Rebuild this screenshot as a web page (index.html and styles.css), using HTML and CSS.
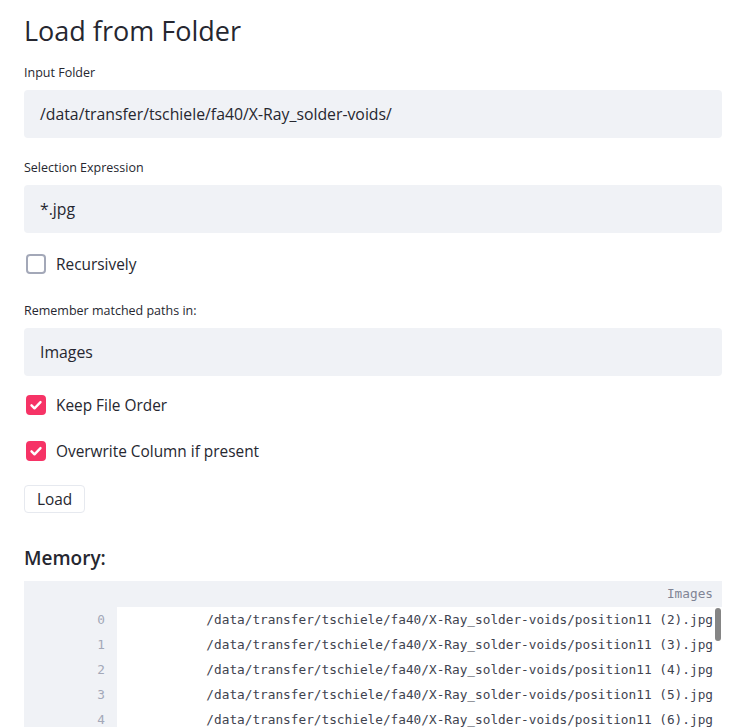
FILE: index.html
```html
<!DOCTYPE html>
<html>
<head>
<meta charset="utf-8">
<link rel="stylesheet" href="styles.css">
</head>
<body>
<main class="main">
  <h1 class="title">Load from Folder</h1>

  <div class="field f1">
    <div class="label">Input Folder</div>
    <div class="input">/data/transfer/tschiele/fa40/X-Ray_solder-voids/</div>
  </div>

  <div class="field f2">
    <div class="label">Selection Expression</div>
    <div class="input">*.jpg</div>
  </div>

  <label class="check c1">
    <span class="box"></span>
    <span class="ctext">Recursively</span>
  </label>

  <div class="field f3">
    <div class="label">Remember matched paths in:</div>
    <div class="input">Images</div>
  </div>

  <label class="check c2">
    <span class="box on"><svg viewBox="0 0 20 20" width="20" height="20"><path d="M5.5 10.3l3 3 6-6.2" fill="none" stroke="#fff" stroke-width="2.4" stroke-linecap="round" stroke-linejoin="round"/></svg></span>
    <span class="ctext">Keep File Order</span>
  </label>

  <label class="check c3">
    <span class="box on"><svg viewBox="0 0 20 20" width="20" height="20"><path d="M5.5 10.3l3 3 6-6.2" fill="none" stroke="#fff" stroke-width="2.4" stroke-linecap="round" stroke-linejoin="round"/></svg></span>
    <span class="ctext">Overwrite Column if present</span>
  </label>

  <div class="btnrow"><button class="btn">Load</button></div>

  <h3 class="subtitle">Memory:</h3>

  <div class="grid">
    <div class="hrow">
      <div class="idx"></div>
      <div class="hcell">Images</div>
    </div>
    <div class="row"><div class="idx">0</div><div class="cell">/data/transfer/tschiele/fa40/X-Ray_solder-voids/position11 (2).jpg</div></div>
    <div class="row"><div class="idx">1</div><div class="cell">/data/transfer/tschiele/fa40/X-Ray_solder-voids/position11 (3).jpg</div></div>
    <div class="row"><div class="idx">2</div><div class="cell">/data/transfer/tschiele/fa40/X-Ray_solder-voids/position11 (4).jpg</div></div>
    <div class="row"><div class="idx">3</div><div class="cell">/data/transfer/tschiele/fa40/X-Ray_solder-voids/position11 (5).jpg</div></div>
    <div class="row"><div class="idx">4</div><div class="cell">/data/transfer/tschiele/fa40/X-Ray_solder-voids/position11 (6).jpg</div></div>
    <div class="row"><div class="idx">5</div><div class="cell">/data/transfer/tschiele/fa40/X-Ray_solder-voids/position11 (7).jpg</div></div>
    <div class="scrollbar"></div>
  </div>
</main>
</body>
</html>
```

FILE: styles.css
```css
html, body {
  margin: 0;
  padding: 0;
  background: #ffffff;
  overflow: hidden;
}

body {
  font-family: "Open Sans", "Noto Sans", sans-serif;
  color: #262730;
}

.main {
  width: 698px;
  padding: 11px 0 0 24px;
  display: flex;
  flex-direction: column;
}

.title {
  margin: 0;
  font-size: 27px;
  line-height: 40px;
  font-weight: 400;
  color: #262730;
}

.field {
  display: flex;
  flex-direction: column;
}

.f1 { margin-top: 14px; }
.f2 { margin-top: 22px; }
.f3 { margin-top: 27px; }

.label {
  font-size: 12.5px;
  line-height: 16px;
  height: 16px;
  margin-bottom: 9px;
  color: #262730;
}

.input {
  height: 48px;
  box-sizing: border-box;
  background: #f0f2f6;
  border-radius: 4px;
  padding: 0 16px;
  display: flex;
  align-items: center;
  font-size: 15.8px;
  color: #262730;
}

.check {
  display: flex;
  align-items: center;
  height: 24px;
  gap: 10px;
  padding-left: 2px;
  font-size: 15.4px;
}

.c1 { margin-top: 19px; }
.c2 { margin-top: 17px; }
.c3 { margin-top: 22px; }

.box {
  width: 20px;
  height: 20px;
  box-sizing: border-box;
  border: 2px solid #a3a8b8;
  border-radius: 4px;
  display: inline-flex;
  align-items: center;
  justify-content: center;
  flex: none;
}

.box.on {
  background: #f63366;
  border-color: #f63366;
}

.box svg {
  display: block;
  flex: none;
}

.ctext {
  color: #262730;
}

.btnrow {
  margin-top: 22px;
  display: flex;
}

.btn {
  height: 28px;
  padding: 0 12px;
  background: #fff;
  border: 1px solid #e6e9ef;
  border-radius: 4px;
  font-family: inherit;
  font-size: 15.4px;
  color: #262730;
}

.subtitle {
  margin: 35px 0 0;
  font-size: 19px;
  line-height: 20px;
  font-weight: 600;
  color: #262730;
}

.grid {
  margin-top: 13px;
  position: relative;
  display: flex;
  flex-direction: column;
  font-family: "DejaVu Sans Mono", "Liberation Mono", monospace;
  font-size: 12.75px;
}

.hrow {
  display: flex;
  height: 26px;
  background: #f0f2f6;
}

.row {
  display: flex;
  height: 25px;
}

.idx {
  width: 93px;
  flex: none;
  box-sizing: border-box;
  background: #f0f2f6;
  text-align: right;
  padding-right: 12px;
  line-height: 25px;
  color: #a3a8b8;
}

.hcell {
  flex: 1;
  text-align: right;
  padding-right: 9px;
  line-height: 26px;
  color: #808495;
}

.cell {
  flex: 1;
  text-align: right;
  padding-right: 9px;
  line-height: 25px;
  color: #404350;
  white-space: nowrap;
}

.scrollbar {
  position: absolute;
  right: 1px;
  top: 27px;
  width: 6px;
  height: 33px;
  border-radius: 3px;
  background: #858585;
}
```
